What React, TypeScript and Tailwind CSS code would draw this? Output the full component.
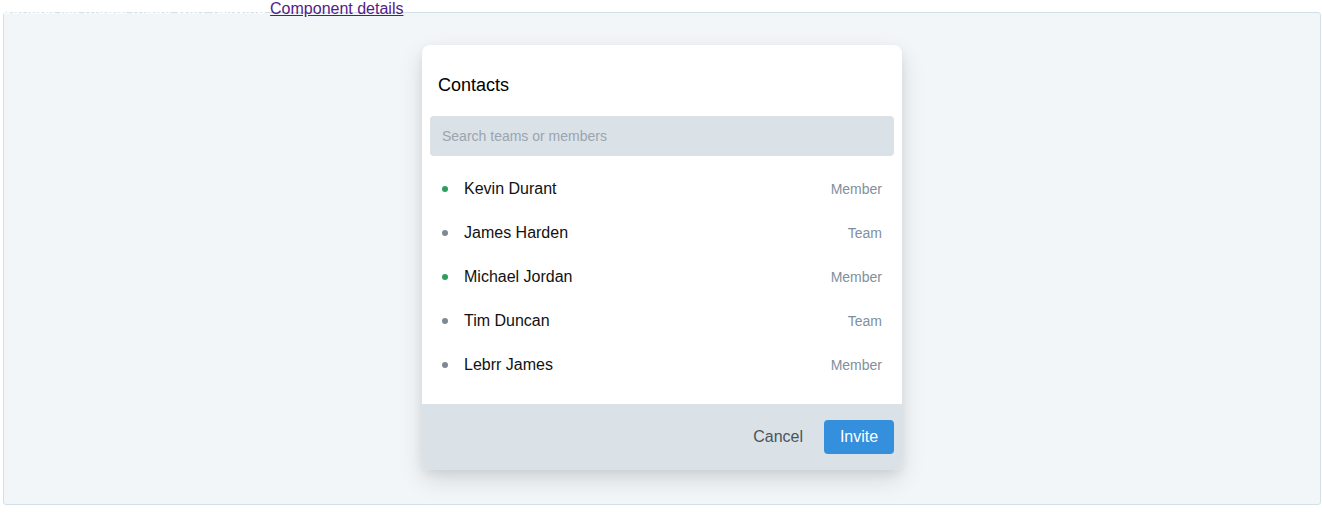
import React from "react";

const contacts = [
  { name: "Kevin Durant", role: "Member", online: true },
  { name: "James Harden", role: "Team", online: false },
  { name: "Michael Jordan", role: "Member", online: true },
  { name: "Tim Duncan", role: "Team", online: false },
  { name: "Lebrr James", role: "Member", online: false },
];

export default function App() {
  return (
    <div className="w-[1322px] h-[525px] bg-white font-['Liberation_Sans',Arial,sans-serif] text-[16px]">
      <div className="h-[18px] leading-[18px] whitespace-nowrap relative z-10">
        <span className="text-white">Contact list modal made with Tailwind </span>
        <a href="#" className="text-[#551a8b] underline">Component details</a>
      </div>
      <div className="-mt-[6px] ml-[3px] w-[1318px] h-[493px] border border-[#d3e1e6] rounded-[3px] bg-[#f2f6f9] flex justify-center pt-[32px]">
        <div className="w-[480px] h-[425px] bg-white rounded-[8px] shadow-[0_10px_25px_rgba(0,0,0,0.12),0_4px_10px_rgba(0,0,0,0.06)] flex flex-col overflow-hidden">
          <div className="px-2 flex-1">
            <div className="mt-[26px] px-2 h-[28px] leading-[28px] text-[18px] text-black">Contacts</div>
            <div className="mt-[17px] h-[40px] rounded-[4px] bg-[#dae1e7] flex items-center px-3 text-[14px] text-[#9aa5ae]">
              Search teams or members
            </div>
            <div className="mt-[11px]">
              {contacts.map((c) => (
                <div key={c.name} className="h-[44px] flex items-center px-3">
                  <span
                    className={
                      c.online
                        ? "w-[6px] h-[6px] rounded-full bg-[#2e9d5d]"
                        : "w-[6px] h-[6px] rounded-full bg-[#7d8a96]"
                    }
                  />
                  <span className="ml-[16px] text-[16px] text-[#111]">{c.name}</span>
                  <span className="ml-auto text-[14px] text-[#8190a0]">{c.role}</span>
                </div>
              ))}
            </div>
          </div>
          <div className="h-[66px] bg-[#dae1e7] flex items-start justify-end pt-[16px] pr-2">
            <span className="mr-[21px] h-[34px] leading-[34px] text-[16px] text-[#4a545c]">Cancel</span>
            <button className="w-[70px] h-[34px] rounded-[4px] bg-[#3490dc] text-white text-[16px]">Invite</button>
          </div>
        </div>
      </div>
    </div>
  );
}
